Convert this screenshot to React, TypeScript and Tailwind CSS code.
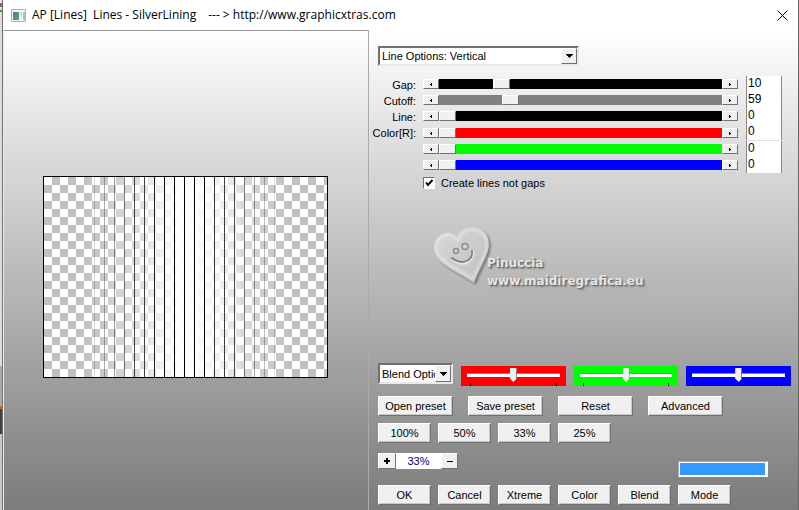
import { useState } from "react";
import type { ReactNode } from "react";
import clsx from "clsx";

const channels = [
  { id: "gap", name: "Gap", label: "Gap:", value: 10, max: 49, track: "bg-black" },
  { id: "cutoff", name: "Cutoff", label: "Cutoff:", value: 59, max: 249, track: "bg-[#808080]" },
  { id: "line", name: "Line", label: "Line:", value: 0, max: 255, track: "bg-black" },
  { id: "red", name: "Red", label: "Color[R]:", value: 0, max: 255, track: "bg-[#ff0000]" },
  { id: "green", name: "Green", label: "", value: 0, max: 255, track: "bg-[#00ff00]" },
  { id: "blue", name: "Blue", label: "", value: 0, max: 255, track: "bg-[#0000ff]" },
];

const blends = [
  { name: "Red blend", color: "bg-[#ff0000]" },
  { name: "Green blend", color: "bg-[#00ff00]" },
  { name: "Blue blend", color: "bg-[#0000ff]" },
];

const presets = ["Open preset", "Save preset", "Reset", "Advanced"];
const zooms = ["100%", "50%", "33%", "25%"];
const actions = ["OK", "Cancel", "Xtreme", "Color", "Blend", "Mode"];

const previewLines = [
  0.15, 0.3, 0.4, 0.5, 0.7, 0.75, 0.85, 0.95, 1, 1, 1, 1, 0.8, 0.75, 0.7, 0.5, 0.35, 0.25, 0.12,
];

const raised = "border border-t-white border-l-white border-r-[#707070] border-b-[#707070] bg-[#f0f0f0]";

const PushButton = ({ className, children }: { className: string; children: ReactNode }) => (
  <button className={clsx(raised, "h-5 shrink-0 text-center leading-4 shadow-[inset_-1px_-1px_0_#c8c8c8]", className)}>
    {children}
  </button>
);

const Combo = ({ label, option, className }: { label: string; option: string; className: string }) => (
  <div className={clsx("relative shrink-0", className)}>
    <select
      aria-label={label}
      className="block h-full w-full appearance-none border-2 border-t-[#707070] border-l-[#707070] border-r-[#e8e8e8] border-b-[#e8e8e8] bg-white pl-0.5 leading-4 outline-none"
    >
      <option>{option}</option>
    </select>
    <span className={clsx(raised, "pointer-events-none absolute top-0.5 right-0.5 bottom-0.5 flex w-4 items-center justify-center")}>
      <svg width="7" height="4" viewBox="0 0 7 4" shapeRendering="crispEdges">
        <path d="M0 0h7v1H6v1H5v1H4v1H3V3H2V2H1V1H0z" />
      </svg>
    </span>
  </div>
);

const ScrollBar = ({ name, value, max, track, onChange }: {
  name: string;
  value: number;
  max: number;
  track: string;
  onChange: (value: number) => void;
}) => {
  const step = clsx(raised, "flex h-full w-4 shrink-0 items-center justify-center");
  return (
    <div className="flex h-4 items-center">
      <div className="flex h-2.5 w-full">
        <button aria-label={`${name} down`} className={step} onClick={() => onChange(Math.max(0, value - 1))}>
          <svg width="2" height="3" viewBox="0 0 2 3" shapeRendering="crispEdges"><path d="M2 0v3H1V2H0V1h1V0z" /></svg>
        </button>
        <input
          type="range"
          aria-label={name}
          value={value}
          max={max}
          onChange={(e) => onChange(Number(e.target.value))}
          className={clsx(
            "h-full min-w-0 flex-1 appearance-none outline-none [&::-webkit-slider-thumb]:h-2.5 [&::-webkit-slider-thumb]:w-[17px] [&::-webkit-slider-thumb]:appearance-none [&::-webkit-slider-thumb]:border [&::-webkit-slider-thumb]:border-t-white [&::-webkit-slider-thumb]:border-r-[#707070] [&::-webkit-slider-thumb]:border-b-[#707070] [&::-webkit-slider-thumb]:border-l-white [&::-webkit-slider-thumb]:bg-[#f0f0f0]",
            track
          )}
        />
        <button aria-label={`${name} up`} className={step} onClick={() => onChange(Math.min(max, value + 1))}>
          <svg width="2" height="3" viewBox="0 0 2 3" shapeRendering="crispEdges"><path d="M0 0h1v1h1v1H1v1H0z" /></svg>
        </button>
      </div>
    </div>
  );
};

const Preview = () => (
  <svg width="285" height="202" viewBox="0 0 285 202" shapeRendering="crispEdges" className="shrink-0">
    <defs>
      <pattern id="checker" x="1" y="1" width="16" height="16" patternUnits="userSpaceOnUse">
        <rect width="16" height="16" fill="#fff" />
        <path d="M8 0h8v8H8zM0 8h8v8H0z" fill="#c0c0c0" />
      </pattern>
      <linearGradient id="veil">
        <stop offset="0.13" stopColor="#fff" stopOpacity="0" />
        <stop offset="0.32" stopColor="#fff" stopOpacity="0.4" />
        <stop offset="0.43" stopColor="#fff" stopOpacity="0.8" />
        <stop offset="0.48" stopColor="#fff" stopOpacity="0.95" />
        <stop offset="0.54" stopColor="#fff" stopOpacity="0.95" />
        <stop offset="0.62" stopColor="#fff" stopOpacity="0.75" />
        <stop offset="0.72" stopColor="#fff" stopOpacity="0.35" />
        <stop offset="0.87" stopColor="#fff" stopOpacity="0" />
      </linearGradient>
    </defs>
    <rect width="285" height="202" fill="url(#checker)" />
    <rect width="285" height="202" fill="url(#veil)" />
    {previewLines.map((opacity, i) => (
      <rect key={i} x={51 + i * 10} y="1" width="1" height="200" fillOpacity={opacity} />
    ))}
    <path d="M0 0h285v202H0zM1 1v200h283V1z" fillRule="evenodd" />
  </svg>
);

const Signature = () => (
  <div className="ml-14 flex items-start">
    <svg width="60" height="62" viewBox="0 0 60 62" className="shrink-0">
      <defs>
        <linearGradient id="heart" x1="0" y1="0" x2="1" y2="1">
          <stop offset="0" stopColor="#dcdcdc" />
          <stop offset="0.4" stopColor="#cecece" />
          <stop offset="1" stopColor="#c0c0c0" />
        </linearGradient>
        <filter id="drop" x="-20%" y="-20%" width="140%" height="140%">
          <feDropShadow dx="2" dy="2" stdDeviation="1" floodColor="#555" floodOpacity="0.65" />
        </filter>
        <filter id="soft">
          <feGaussianBlur stdDeviation="0.8" />
        </filter>
      </defs>
      <path
        d="M40 57C28 48 6 40 1 27C-3 15 6 5 17 7C20 8 22 9 23 11C25 3 34 -1 43 2C54 5 57 16 53 27C49 38 44 45 40 57Z"
        fill="url(#heart)"
        filter="url(#drop)"
      />
      <path
        d="M39 53C28 45 8 38 3 26C0 15 8 7 17 9C20 10 22 12 24 15C26 6 34 2 42 4C52 7 55 16 51 27C47 37 42 44 39 53Z"
        fill="none"
        stroke="#ededed"
        strokeWidth="2"
        strokeOpacity="0.7"
        filter="url(#soft)"
      />
      <g fill="#d2d2d2" stroke="#8c8c8c" strokeWidth="1.5">
        <circle cx="22" cy="25" r="2.500" />
        <circle cx="31" cy="20.500" r="3" />
      </g>
      <path d="M18.500 33C26 42 41 38 39 25" fill="none" stroke="#e4e4e4" strokeWidth="2" />
      <path d="M18 32C27 39 39 36 38 25" fill="none" stroke="#808080" strokeWidth="1.800" strokeLinecap="round" />
    </svg>
    <div className="-ml-[7px] pt-7 font-['DejaVu_Sans',sans-serif] text-xs leading-[18px] font-bold text-[#e6e6e6] [text-shadow:1px_1px_1px_#666,2px_2px_2px_#888]">
      <p>Pinuccia</p>
      <p>www.maidiregrafica.eu</p>
    </div>
  </div>
);

const App = () => {
  const [values, setValues] = useState(channels.map((c) => c.value));
  const [lines, setLines] = useState(true);

  const setValue = (index: number, value: number) =>
    setValues(values.map((v, i) => (i === index ? value : v)));

  const bars = channels.map((c, i) => (
    <ScrollBar key={c.id} name={c.name} value={values[i]} max={c.max} track={c.track} onChange={(v) => setValue(i, v)} />
  ));

  const fields = channels.map((c, i) => (
    <input
      key={c.id}
      id={c.id}
      aria-label={c.name}
      value={values[i]}
      onChange={(e) => setValue(i, Number(e.target.value) || 0)}
      className="block h-4 w-full border-x border-[#888] bg-white pb-0.5 pl-px text-xs leading-3 outline-none"
    />
  ));

  return (
    <div className="flex min-h-screen bg-white font-['Liberation_Sans',Arial,sans-serif] text-[11px] text-black">
      {/* Window edge */}
      <div className="w-[3px] shrink-0 border-r border-[#707070] bg-[linear-gradient(#e8e8e8_0_3px,#e04030_3px_5px,#4080d0_5px_7px,#dddddd_7px_10px,#30a040_10px_12px,#dddddd_12px_366px,#aaaaaa_366px_406px,#e06020_406px_409px,#404048_409px_434px,#c8c8c8_434px)]" />

      <div className="flex min-w-0 flex-1 flex-col border-r border-[#666]">
        <header className="flex h-[30px] shrink-0 items-center bg-white pr-2 pl-2">
          <svg width="15" height="13" viewBox="0 0 15 13" className="shrink-0">
            <defs>
              <linearGradient id="app" x1="0" y1="0" x2="1" y2="1">
                <stop offset="0" stopColor="#4b78ae" />
                <stop offset="1" stopColor="#57ab72" />
              </linearGradient>
            </defs>
            <path d="M0.5 0.5h14v12h-14z" fill="#f2f4f6" stroke="#a9b0b6" />
            <path d="M2 3h6v8H2z" fill="url(#app)" />
            <path d="M9 3h2v4H9z" fill="#cbd9df" />
            <path d="M12 3h2v8h-2z" fill="#a9cbbd" />
          </svg>
          <h1 className="ml-1.5 flex gap-3 font-['Open_Sans',sans-serif] text-xs whitespace-pre">
            <span>AP [Lines]  Lines - SilverLining</span>
            <span>--- &gt; http://www.graphicxtras.com</span>
          </h1>
          <button aria-label="Close" className="ml-auto flex h-5 w-4 items-center justify-center">
            <svg width="11" height="11" viewBox="0 0 11 11">
              <path d="M0.5 0.5l10 10M10.5 0.5l-10 10" stroke="#000" />
            </svg>
          </button>
        </header>

        <div className="flex flex-1 bg-linear-to-b from-[#ffffff] to-[#7c7c7c]">
          <section className="flex w-[366px] shrink-0 flex-col items-center border-t border-r border-l border-t-[#999] border-r-[#aaa] border-l-[#eee] pt-[145px] pr-px">
            <Preview />
          </section>

          <main className="flex min-w-0 flex-1 flex-col pt-4 pb-[5px] pl-[9px]">
            <Combo label="Line options" option="Line Options: Vertical" className="h-5 w-[201px]" />

            <div className="mt-2.5 flex pr-4">
              <div className="w-[38px] shrink-0 pt-px">
                {channels.filter((c) => c.label).map((c) => (
                  <label key={c.id} htmlFor={c.id} className="flex h-4 justify-end leading-4">{c.label}</label>
                ))}
              </div>
              <div className="ml-[7px] flex min-w-0 flex-1 flex-col gap-px">
                <div>{bars.slice(0, 3)}</div>
                <div>{bars.slice(3)}</div>
              </div>
              <div className="ml-2 flex w-9 shrink-0 flex-col gap-px">
                <div>{fields.slice(0, 4)}</div>
                <div>{fields.slice(4)}</div>
              </div>
            </div>

            <label className="mt-1 ml-[45px] flex h-3 items-center gap-1.5 leading-3">
              <span className="relative h-3 w-3 shrink-0">
                <input
                  type="checkbox"
                  checked={lines}
                  onChange={() => setLines(!lines)}
                  className="block h-3 w-3 appearance-none border border-t-[#707070] border-r-white border-b-white border-l-[#707070] bg-white"
                />
                {lines && (
                  <svg width="12" height="12" viewBox="0 0 12 12" className="pointer-events-none absolute inset-0">
                    <path d="M3 5.5l2 2.5l4.500-5" fill="none" stroke="#000" strokeWidth="2" />
                  </svg>
                )}
              </span>
              Create lines not gaps
            </label>

            <div className="flex-1 pt-[37px]">
              <Signature />
            </div>

            <div className="flex items-start gap-2 pr-[7px]">
              <Combo label="Blend options" option="Blend Options" className="h-[21px] w-[75px]" />
              <div className="mt-[3px] flex min-w-0 flex-1 gap-2">
                {blends.map((b) => (
                  <div key={b.name} className={clsx("flex h-5 min-w-0 flex-1 flex-col justify-between px-1.5 pt-0.5", b.color)}>
                    <input
                      type="range"
                      aria-label={b.name}
                      defaultValue={50}
                      className="h-3.5 w-full appearance-none bg-transparent outline-none [&::-webkit-slider-runnable-track]:h-1 [&::-webkit-slider-runnable-track]:border-t [&::-webkit-slider-runnable-track]:border-[#888] [&::-webkit-slider-runnable-track]:bg-white [&::-webkit-slider-thumb]:-mt-1.5 [&::-webkit-slider-thumb]:h-3.5 [&::-webkit-slider-thumb]:w-[7px] [&::-webkit-slider-thumb]:appearance-none [&::-webkit-slider-thumb]:border-r [&::-webkit-slider-thumb]:border-[#777] [&::-webkit-slider-thumb]:bg-[#f0f0f0] [&::-webkit-slider-thumb]:[clip-path:polygon(0_0,100%_0,100%_75%,50%_100%,0_75%)]"
                    />
                    <div className="mx-[3px] h-[3px] border-x border-black" />
                  </div>
                ))}
              </div>
            </div>

            <div className="mt-2.5 flex gap-[15px]">
              {presets.map((p) => <PushButton key={p} className="w-[75px]">{p}</PushButton>)}
            </div>

            <div className="mt-[7px] flex gap-[7px]">
              {zooms.map((z) => <PushButton key={z} className="w-[53px]">{z}</PushButton>)}
            </div>

            <div className="mt-2.5 flex h-6 items-start">
              <button aria-label="Zoom in" className={clsx(raised, "flex h-4 w-[18px] items-center justify-center")}>
                <svg width="6" height="6" viewBox="0 0 6 6" shapeRendering="crispEdges"><path d="M2 0h2v2h2v2H4v2H2V4H0V2h2z" /></svg>
              </button>
              <input aria-label="Zoom" defaultValue="33%" className="h-4 w-[45px] bg-white text-center text-[#000080] outline-none" />
              <button aria-label="Zoom out" className={clsx(raised, "flex h-4 w-[17px] items-center justify-center")}>
                <svg width="6" height="1" viewBox="0 0 6 1" shapeRendering="crispEdges"><path d="M0 0h6v1H0z" /></svg>
              </button>
              <div role="progressbar" aria-label="Progress" aria-valuenow={97} className="mt-2 mr-[30px] ml-auto h-4 w-[90px] border border-t-[#aaa] border-l-[#aaa] border-r-white border-b-white bg-white pr-px">
                <div className="h-full border border-white bg-[#3399ff]" />
              </div>
            </div>

            <div className="mt-2 flex gap-[7px]">
              {actions.map((a) => <PushButton key={a} className="w-[53px]">{a}</PushButton>)}
            </div>
          </main>
        </div>
      </div>
    </div>
  );
};

export default App;
